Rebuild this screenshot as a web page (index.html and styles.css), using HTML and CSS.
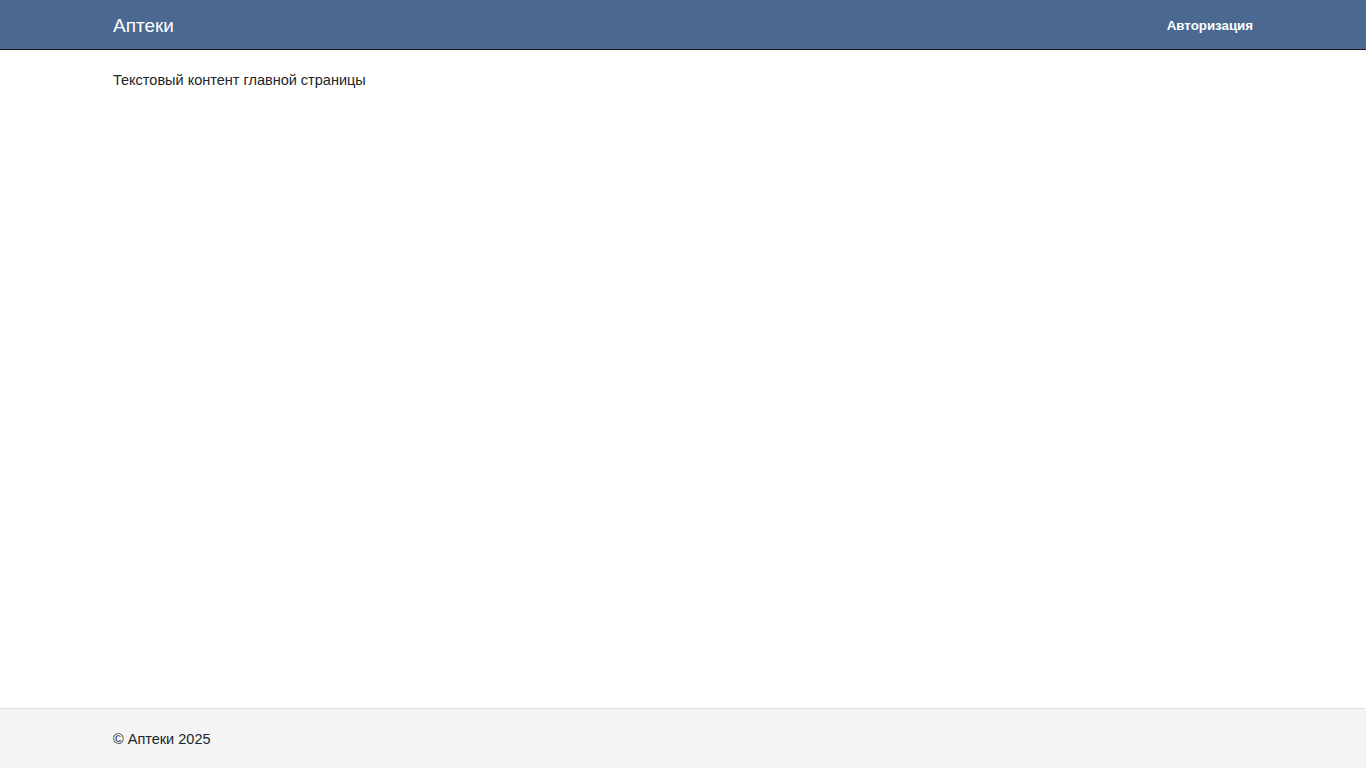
FILE: index.html
```html
<!DOCTYPE html>
<html lang="ru">
<head>
<meta charset="utf-8">
<title>Аптеки</title>
<link rel="stylesheet" href="styles.css">
</head>
<body>
<header class="header">
  <div class="container header-inner">
    <a class="brand" href="#">Аптеки</a>
    <nav class="nav"><a class="nav-link" href="#">Авторизация</a></nav>
  </div>
</header>
<main class="main">
  <div class="container">
    <p class="content">Текстовый контент главной страницы</p>
  </div>
</main>
<footer class="footer">
  <div class="container">© Аптеки 2025</div>
</footer>
</body>
</html>
```

FILE: styles.css
```css
* { box-sizing: border-box; }
html, body { height: 100%; }
body {
  margin: 0;
  font-family: "Liberation Sans", Arial, sans-serif;
  font-size: 14.5px;
  color: #212529;
  background: #fff;
  display: flex;
  flex-direction: column;
}
.container {
  width: 1140px;
  margin: 0 auto;
}
.header {
  background: #4a6890;
  border-bottom: 1px solid #1a1a1a;
  height: 50px;
  flex: none;
}
.header-inner {
  height: 49px;
  display: flex;
  align-items: center;
  justify-content: space-between;
}
.brand {
  color: #fff;
  text-decoration: none;
  font-size: 19px;
  line-height: 24px;
  padding-top: 3px;
}
.nav-link {
  color: #fff;
  text-decoration: none;
  font-size: 13.3px;
  font-weight: bold;
}
.main {
  flex: 1;
}
.content {
  margin: 22px 0 0;
  line-height: 17px;
}
.footer {
  flex: none;
  height: 60px;
  background: #f4f4f4;
  border-top: 1px solid #dedede;
  display: flex;
  align-items: center;
}
```
